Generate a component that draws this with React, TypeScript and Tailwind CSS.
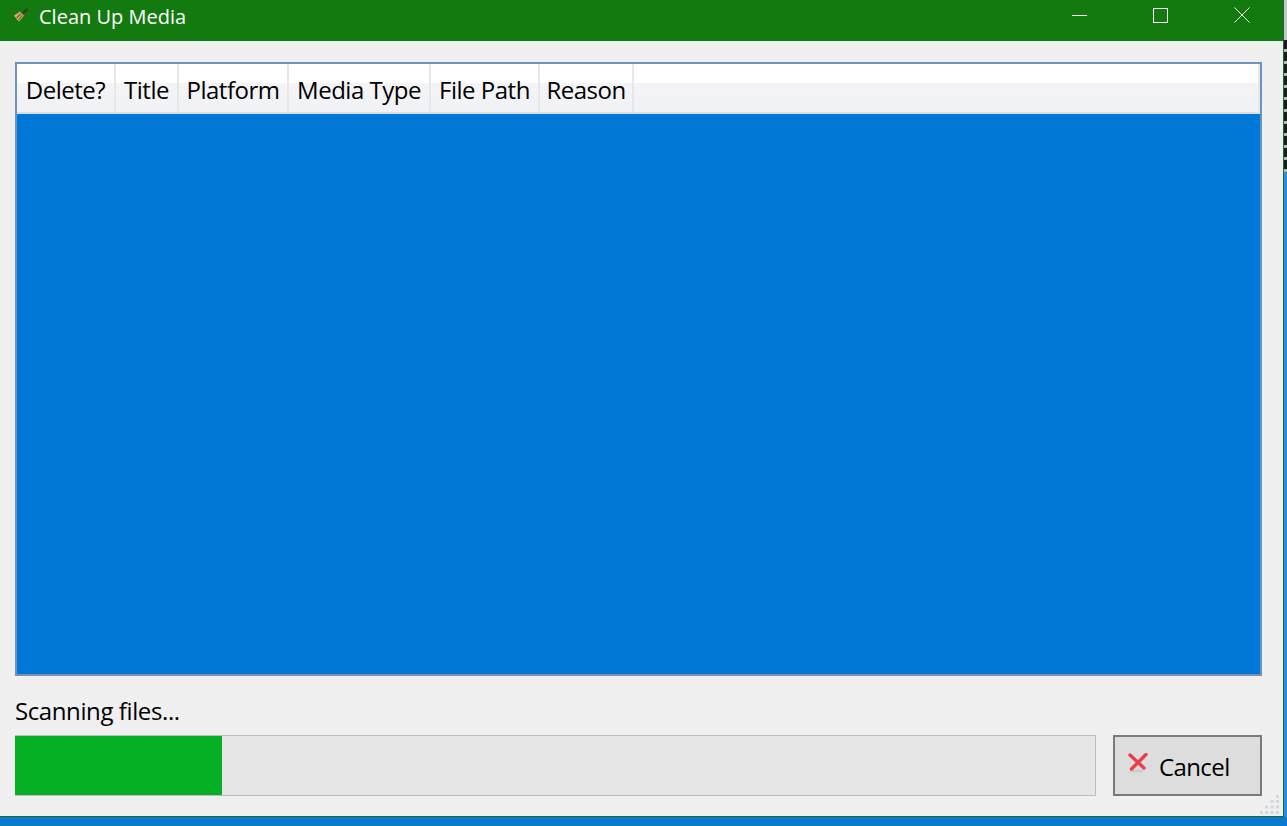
const columns = [
  { label: "Delete?", width: "w-[99px]" },
  { label: "Title", width: "w-[63px]" },
  { label: "Platform", width: "w-[110px]" },
  { label: "Media Type", width: "w-[142px]" },
  { label: "File Path", width: "w-[109px]" },
  { label: "Reason", width: "w-[94px]" },
];

function BroomIcon() {
  return (
    <svg width="16" height="15" viewBox="0 0 16 15">
      <path d="M8.5 6.5 L14.5 1" stroke="#4a2f17" strokeWidth="2" />
      <path d="M1 7.5 L7 3.5 L11 7.5 L6 13.5 Q3 11 1 7.5 Z" fill="#d0ab73" />
      <path d="M3.5 10 L8 5.5 M5.5 12 L9.5 7" stroke="#7d5c32" strokeWidth="1.1" />
    </svg>
  );
}

function CancelIcon() {
  return (
    <svg className="blur-[0.4px]" width="20" height="20" viewBox="0 0 20 20">
      <path d="M2 18 L15 18" stroke="#c4c0c0" strokeWidth="2.5" opacity="0.7" />
      <path d="M2 2 L16 15 M18 1.5 L3.5 16" stroke="#ee3d4a" strokeWidth="3.4" strokeLinecap="round" />
    </svg>
  );
}

function ResizeGrip() {
  const dots = [
    [16, 1], [16, 6], [10.5, 6], [16, 11.5], [10.5, 11.5], [5, 11.5], [16, 17], [10.5, 17], [5, 17], [0, 17],
  ];
  return (
    <svg className="absolute right-[1px] bottom-0" width="22" height="22" viewBox="0 0 22 22">
      {dots.map(([x, y]) => (
        <rect key={`${x}-${y}`} x={x} y={y} width="3" height="3" fill="#d3d8e0" />
      ))}
    </svg>
  );
}

export default function App() {
  return (
    <div className="flex flex-col w-[1287px] h-[826px] overflow-hidden bg-[#0b79cf] font-['Open_Sans',sans-serif] text-black">
      <div className="flex h-[817px]">
        <div className="relative flex flex-col w-[1284px] border-r border-b border-[#1c6b2a] bg-[#f0f0f0]">
          {/* title bar */}
          <div className="flex items-center h-[41px] shrink-0 bg-[#127a0f] text-white">
            <div className="ml-[13px] -mt-[10px]">
              <BroomIcon />
            </div>
            <span className="ml-[10px] -mt-[8px] text-[20px]">Clean Up Media</span>
            <div className="ml-auto flex items-center h-full -mt-[11px] pr-[33px]">
              <div className="w-[15px] h-px bg-white" />
              <div className="ml-[66px] w-[15px] h-[15px] border border-white" />
              <svg className="ml-[66px]" width="16" height="16" viewBox="0 0 16 16">
                <path d="M0.5 0.5 L15.5 15.5 M15.5 0.5 L0.5 15.5" stroke="#fff" strokeWidth="1" />
              </svg>
            </div>
          </div>

          <div className="flex flex-col flex-1 pl-[15px] pr-[21px] pt-[21px]">
            {/* table */}
            <div className="flex flex-col h-[614px] border-2 border-[#6b95c0] border-b-[#7d93ad] bg-[#0078d7]">
              <div className="flex h-[50px] shrink-0 border-r-2 border-b-2 border-r-[#e6e7ea] border-b-[#dcdee2] bg-[linear-gradient(#ffffff_0,#ffffff_40%,#f4f4f7_40%,#f1f2f5_100%)]">
                {columns.map((col) => (
                  <div
                    key={col.label}
                    className={`flex items-center justify-center shrink-0 pt-[3px] ${col.width} border-r-2 border-[#e6e7ea] text-[24px] tracking-[-0.5px]`}
                  >
                    {col.label}
                  </div>
                ))}
              </div>
            </div>

            <div className="mt-[18px] h-[34px] text-[24px] tracking-[-0.4px] leading-[34px]">Scanning files...</div>

            {/* progress and cancel */}
            <div className="flex mt-[7px] h-[61px]">
              <div className="flex w-[1081px] border-t border-r border-b border-[#bdbdbd] bg-[#e6e6e6]">
                <div className="w-[207px] bg-[#06b025]" />
              </div>
              <button className="flex items-center ml-[17px] w-[149px] border-2 border-[#7a7a7a] bg-[#dddddd] text-[24px] tracking-[-0.6px] pl-[13px]">
                <span className="-mt-[6px]">
                  <CancelIcon />
                </span>
                <span className="ml-[11px] pt-[2px]">Cancel</span>
              </button>
            </div>
          </div>

          <ResizeGrip />
        </div>

        {/* desktop behind the window */}
        <div className="flex flex-col flex-1">
          <div className="h-[40px] bg-[#c9c9cc]" />
          <div className="h-[132px] bg-[repeating-linear-gradient(#1c1c1c_0,#1c1c1c_9px,#b8b8b8_9px,#b8b8b8_12px)]" />
          <div className="flex-1 bg-[#2e8fdc]" />
        </div>
      </div>
    </div>
  );
}
